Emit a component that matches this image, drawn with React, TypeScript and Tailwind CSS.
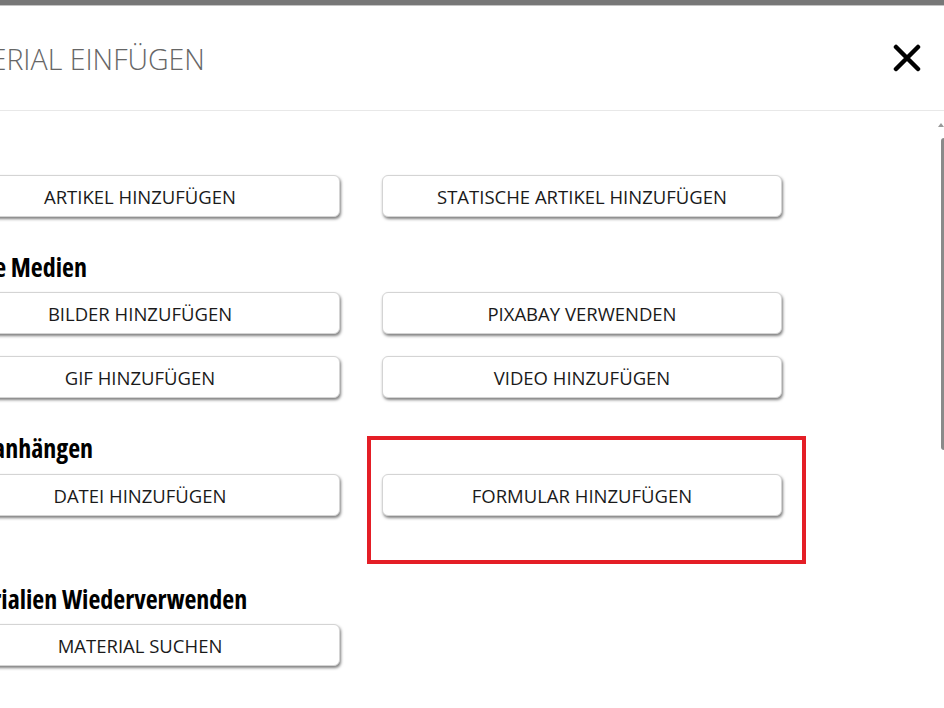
import React from 'react';

const btn =
  'relative flex h-[42px] w-[400px] items-center justify-center rounded-[6px] border border-[#d4d4d4] bg-white pt-px text-[18.5px] uppercase text-[#1a1a1a] shadow-[1px_2px_3px_rgba(0,0,0,0.5)]';

const heading =
  "font-['Open_Sans',sans-serif] text-[26px] font-bold leading-[32px] text-black [font-stretch:75%]";

function Btn({ label, children }: { label: string; children?: React.ReactNode }) {
  return (
    <div className={btn}>
      {label}
      {children}
    </div>
  );
}

export default function App() {
  return (
    <div className="relative h-[708px] w-[944px] overflow-hidden bg-white font-['Open_Sans',sans-serif]">
      {/* dimmed page behind the modal */}
      <div className="h-[5px] bg-[#777]" />
      <div className="h-px bg-[#c4c4c4]" />

      <div className="-ml-[60px] w-[1004px]">
        {/* header */}
        <div className="flex h-[105px] items-center justify-between border-b border-[#e8e8e8] pr-[24px]">
          <h2 className="-ml-[6px] pt-[2px] text-[28.5px] font-light text-[#666]">MATERIAL EINFÜGEN</h2>
          <svg width="28" height="28" viewBox="0 0 28 28" className="mr-[-1px]">
            <path d="M3 3 L25 25 M25 3 L3 25" stroke="#000" strokeWidth="4.5" strokeLinecap="round" />
          </svg>
        </div>

        {/* body */}
        <div className="flex flex-col pt-[64px]">
          <div className="flex gap-[42px]">
            <Btn label="Artikel hinzufügen" />
            <Btn label="Statische Artikel hinzufügen" />
          </div>

          <h3 className={`${heading} mt-[34px]`}>Eigene Medien</h3>
          <div className="mt-[9px] flex gap-[42px]">
            <Btn label="Bilder hinzufügen" />
            <Btn label="Pixabay verwenden" />
          </div>
          <div className="mt-[22px] flex gap-[42px]">
            <Btn label="GIF hinzufügen" />
            <Btn label="Video hinzufügen" />
          </div>

          <h3 className={`${heading} mt-[34px]`}>Dateianhängen</h3>
          <div className="mt-[10px] flex gap-[42px]">
            <Btn label="Datei hinzufügen" />
            <Btn label="Formular hinzufügen">
              <div className="pointer-events-none absolute -left-[16px] -right-[25px] -top-[39px] -bottom-[49px] border-[4px] border-[#e41e26]" />
            </Btn>
          </div>

          <h3 className={`${heading} mt-[67px]`}>Materialien Wiederverwenden</h3>
          <div className="mt-[9px] flex gap-[42px]">
            <Btn label="Material suchen" />
          </div>
        </div>
      </div>

      {/* scrollbar */}
      <div className="absolute right-0 top-[123px] h-0 w-0 border-x-[3px] border-b-[4px] border-x-transparent border-b-[#999]" />
      <div className="absolute right-0 top-[138px] h-[312px] w-[3px] rounded-l-sm bg-[#8a8a8a]" />
    </div>
  );
}
